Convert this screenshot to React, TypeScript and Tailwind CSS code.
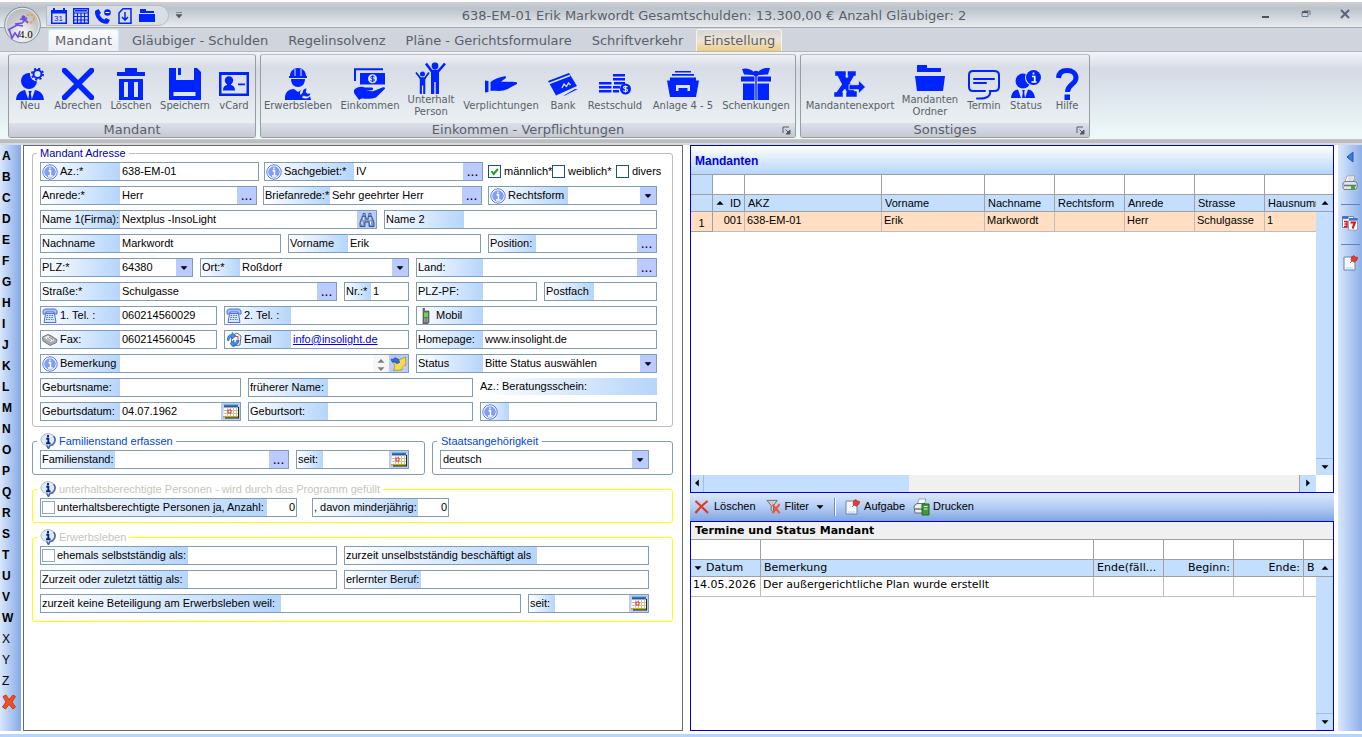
import { useId, type ReactNode } from "react";

const BLUE = "#0024ff";

function Ico({ children, className = "size-8" }: { children: ReactNode; className?: string }) {
  return (
    <svg viewBox="0 0 32 32" className={`${className} shrink-0`} fill={BLUE} aria-hidden="true">
      {children}
    </svg>
  );
}

/* ---------- ribbon icons ---------- */
const suit = (
  <>
    <path d="M2 32c.5-6 3.500-9 9-10l3.500 10zM30 32c-.5-6-3.500-9-9-10l-3.500 10z" />
    <path d="M14.200 23h3.600l-1 2.500 1.200 6.500h-4l1.200-6.500z" />
  </>
);
const IcNeu = () => (
  <Ico>
    <circle cx="15" cy="13" r="8" />
    {suit}
    <circle cx="23.500" cy="6" r="7.500" fill="#e3e6ee" />
    <circle cx="23.500" cy="6" r="4" fill="none" stroke={BLUE} strokeWidth="2" />
    <circle cx="23.500" cy="6" r="5.600" fill="none" stroke={BLUE} strokeWidth="1.800" strokeDasharray="2.200 2.200" />
  </Ico>
);
const IcX = () => (
  <Ico>
    <path d="M2.500 2.500 29.500 29.500M29.500 2.500 2.500 29.500" stroke={BLUE} strokeWidth="5.500" strokeLinecap="round" />
  </Ico>
);
const IcTrash = () => (
  <Ico>
    <path d="M2 4h8V0h12v4h8v4H2zM4 11h24v21H4zM9 14v15h4V14zM19 14v15h4V14z" fillRule="evenodd" />
  </Ico>
);
const IcSave = () => (
  <Ico>
    <path d="M0 0h7v12h18V0h3l4 4v28H0zM4.500 24v4h22v-4z" fillRule="evenodd" />
    <path d="M9 0h3v7H9z" />
  </Ico>
);
const IcCard = () => (
  <Ico>
    <path d="M1 4h30v24H1zM3.500 7v18.500h25V7z" fillRule="evenodd" />
    <circle cx="11" cy="12.500" r="4.200" />
    <path d="M5 22.500c0-4 2-5 4-5.500v-2h4v2c2 .5 4 1.500 4 5.500zM20 15.500h7v1.800h-7z" />
  </Ico>
);
const IcWorker = () => (
  <Ico>
    <path d="M8 8c0-5 3.500-8 8-8s8 3 8 8h1v2H7V8zM9 11h14c0 5-3 8-7 8s-7-3-7-8zM3 30c0-6 4-9 9-9l4 3 4-3c3 0 5 .8 7 3l2 8H3z" />
    <path d="M13 1v7M19 1v7" stroke="#e0e4ec" strokeWidth="1" />
    <circle cx="23.500" cy="25" r="5.500" fill="#e4e9ee" />
    <path d="m16 31 6.500-6" stroke={BLUE} strokeWidth="2.600" />
    <path d="M24.500 20.500a4 4 0 1 0 4 5l-3 .3-1.700-1.600z" />
  </Ico>
);
const IcMoney = () => (
  <Ico>
    <path d="M1 13V1.200h28" fill="none" stroke={BLUE} strokeWidth="2" />
    <path d="M6 5h25v11.500H6z" />
    <circle cx="18.500" cy="10.700" r="4.500" fill="#dfe4ee" />
    <path d="M20.500 8.800c-1-.9-3.800-.8-3.800.6 0 1.700 3.800.9 3.800 2.600 0 1.500-2.900 1.600-4 .5M18.600 7.500v6.600" fill="none" stroke={BLUE} strokeWidth="1" />
    <path d="M0 22c3-3.500 8-4 11-2.500h7c1.500.2 1.500 2.500 0 2.700l-6 .6 7 .5 10-4c2-.6 2.600 1 1.500 2L22 29.500c-5 2-11 1-14.500 1L5 32 0 25z" />
  </Ico>
);
const IcPeople = () => (
  <Ico>
    <circle cx="20" cy="4" r="3.400" />
    <circle cx="7.500" cy="12" r="2.500" />
    <path d="m11 1.500 5.500 7.500h7L30 1.500" fill="none" stroke={BLUE} strokeWidth="2.600" />
    <path d="M16 8h8v24h-3.300V20h-1.400v12H16zM4.800 15.500h5.500V32H8.200v-8.500H6.900V32H4.800z" />
    <path d="m1 10.500 4.500 5.800h4.300L14 10.500" fill="none" stroke={BLUE} strokeWidth="1.800" />
  </Ico>
);
const IcHand = () => (
  <Ico>
    <path d="M0 12.500 3.500 13v11L0 24.500zM5.500 14c3-2 6-4 9-4.500l5-1.300c2-.2 2 1.800.5 2.600l-4 2.700c4 .5 11 .2 15.500.7 1.500.3 1 1.500 0 2C27 18.500 22 21.500 18.500 22.500c-4 1-9 0-13 .5z" />
  </Ico>
);
const IcBank = () => (
  <Ico>
    <path d="M1 13 22 5l8 13-21 9.500z" />
    <path d="M2 15.500 23 7.500" stroke="#dfe5ec" strokeWidth="1.500" />
    <path d="m15 20 2-4 2.500 2.500 2-3.500 2 2" fill="none" stroke="#dfe5ec" strokeWidth="1.300" />
    <path d="m15 28 13-7.500 4 .5-14 7z" stroke="#e4e9ee" strokeWidth="1" />
  </Ico>
);
const IcCoins = () => (
  <Ico>
    <path d="M14 6h12v2.600H14zM14 10h12v2.600H14zM15 14h11v2.600H15zM0 14h12.500v2.600H0zM0 18h12.500v2.600H0zM14 18h7v2.600h-7zM0 22h12.500v2.600H0zM14 22h6v2.600h-6z" />
    <circle cx="26.500" cy="21" r="5.500" />
    <path d="M28.500 19c-1-1-4-.8-4 .6 0 1.700 4 .9 4 2.600 0 1.500-3 1.600-4.200.5M26.500 17.500v7" fill="none" stroke="#e4e9ee" strokeWidth="1.100" />
  </Ico>
);
const IcDrawer = () => (
  <Ico>
    <path d="M8 3h16v1.500H8zM5 6h22v1.800H5zM3 9.500h26v3h3l-3 16.500H3L0 12.500h3zM9 17v6h2.500v-3h9v3H23v-6z" fillRule="evenodd" />
  </Ico>
);
const IcGift = () => (
  <Ico>
    <path d="M1 8.500h13.500v5H1zM17.500 8.500H31v5H17.500zM3 15.500h11.500V32H3zM17.500 15.500H29V32H17.500zM15.300 8h1.400v24h-1.400zM14 7 4 6.500 2 1c4-1.500 9 0 12 3zM18 7l10-.5L30 0c-4-1-9 1-12 4z" />
    <circle cx="16" cy="5.500" r="2.800" />
  </Ico>
);
const IcExport = () => (
  <Ico>
    <path d="M2 4h9v3H9.500l3.500 5 3-5h-1.500V4H21v3h-1.500L15 14.500l5 9.500h2v4h-9v-3h1.200L11 19l-4.500 6H8v3H1v-3h2l6-8.500L4 7H2z" stroke={BLUE} strokeWidth="1.500" />
    <path d="m31.500 19-7-6.800v4.500H15v5h9.500v4z" stroke="#dfe5ec" strokeWidth=".8" />
  </Ico>
);
const IcFolder = () => (
  <Ico>
    <path d="M3 3h10v3h14v4H3zM1 14h30l-2 15H3z" />
  </Ico>
);
const IcNote = () => (
  <Ico>
    <path d="M9 23H5c-3 0-4-1.500-4-4V7c0-2.500 1.500-4 4-4h21c3 0 5 1.500 5 4v12c0 2.500-1.500 4-5 4h-4c1 5-3 8-13 7.500M6 11h20M6 15h12M10 23h7" fill="none" stroke={BLUE} strokeWidth="2" strokeLinecap="round" />
  </Ico>
);
const IcStatus = () => (
  <Ico>
    <circle cx="13" cy="13" r="7.500" />
    <path d="M1 30c.5-5 3-8 7-8.500L11 30zM25 30c-.5-5-3-8-7-8.500L15 30zM12 22h3l-.8 2 .8 6h-3l.8-6z" />
    <circle cx="23.500" cy="9.500" r="8.500" fill="#e0e4ec" />
    <circle cx="23.500" cy="9.500" r="7.500" />
    <path d="M22 8.500h2.700V14M21.500 14h5M23.500 4.500v2" fill="none" stroke="#fff" strokeWidth="1.700" />
  </Ico>
);
const IcHelp = () => (
  <Ico>
    <path d="M7.500 10c.3-5 3.500-7.500 8.500-7.500s9 2.500 9 7.500c0 6.500-8.500 6-8.500 14" fill="none" stroke={BLUE} strokeWidth="5" />
    <path d="M13.500 26.500h5.500V32h-5.500z" />
  </Ico>
);

const groups: { title: string; launcher?: boolean; items: [string, () => ReactNode, string][] }[] = [
  {
    title: "Mandant",
    items: [
      ["Neu", IcNeu, "w-[42px]"],
      ["Abrechen", IcX, "w-[54px]"],
      ["Löschen", IcTrash, "w-[52px]"],
      ["Speichern", IcSave, "w-[56px]"],
      ["vCard", IcCard, "w-[42px]"],
    ],
  },
  {
    title: "Einkommen - Verpflichtungen",
    launcher: true,
    items: [
      ["Erwerbsleben", IcWorker, "w-[74px]"],
      ["Einkommen", IcMoney, "w-[70px]"],
      ["Unterhalt\nPerson", IcPeople, "w-[52px]"],
      ["Verplichtungen", IcHand, "w-[88px]"],
      ["Bank", IcBank, "w-[36px]"],
      ["Restschuld", IcCoins, "w-[68px]"],
      ["Anlage 4 - 5", IcDrawer, "w-[68px]"],
      ["Schenkungen", IcGift, "w-[78px]"],
    ],
  },
  {
    title: "Sonstiges",
    launcher: true,
    items: [
      ["Mandantenexport", IcExport, "w-[98px]"],
      ["Mandanten\nOrdner", IcFolder, "w-[62px]"],
      ["Termin", IcNote, "w-[46px]"],
      ["Status", IcStatus, "w-[38px]"],
      ["Hilfe", IcHelp, "w-[44px]"],
    ],
  },
];

/* ---------- small coloured icons ---------- */
const S = ({ children, className = "size-4" }: { children: ReactNode; className?: string }) => (
  <svg viewBox="0 0 16 16" className={`${className} shrink-0`} aria-hidden="true">
    {children}
  </svg>
);
const Info = () => (
  <S>
    <circle cx="8" cy="8" r="7.200" fill="#fff" stroke="#5577e8" strokeWidth="1" />
    <circle cx="8" cy="8" r="5.800" fill="#7f9cfa" />
    <path d="M8 3.500v2M6.500 6.800H8.500V12M6 12h4.500" stroke="#fff" strokeWidth="1.400" fill="none" />
  </S>
);
const Bubble = () => (
  <S>
    <path d="M8 .7c4 0 7 2.700 7 6 0 3-2.300 5.300-5 5.800L8.500 15.500 6.800 12.500C3.500 12 1 9.700 1 6.700s3-6 7-6z" fill="#dfeafa" stroke="#a3b4cb" />
    <path d="M13.500 3c3.500 4 .5 9-3.500 9.500L8.500 15.500 6.800 12.500" fill="none" stroke="#4a6da0" strokeWidth="1.600" />
    <path d="M8 2v2.200M6.300 5.700h2V10M6 10.200h4.500" stroke="#0a1f8a" strokeWidth="1.900" fill="none" />
  </S>
);
const Phone = () => (
  <S>
    <path d="M1 2.500 3 1h10l2 1.500V6h-3V4H4v2H1z" fill="#a9c0fb" stroke="#4a6fe0" />
    <path d="M3.500 5.500h9L14 14.500H2z" fill="#dbe6ff" stroke="#4a6fe0" />
    <path d="M4.500 7.500h7M4.300 9.500h7.500M4 11.500h8" stroke="#4a6fe0" strokeWidth="1.200" strokeDasharray="1.500 1" />
  </S>
);
const Fax = () => (
  <S>
    <path d="M.5 5 6 2.500l3 1.200 6 4-.5 2.800L8 13.500 1 9z" fill="#a9aaaf" stroke="#777a80" />
    <path d="m2 5.500 4-2L12.500 8 9 10z" fill="#ececf0" />
    <path d="m5 6 4 2.700M7 5l4 2.700" stroke="#898c94" />
  </S>
);
const Mail = () => (
  <S>
    <path d="M5 4 11 1l4 3-1 9-8 1z" fill="#f4f5f7" stroke="#60708c" />
    <path d="M1.500 8.500C1 4.500 3 2.500 6 2.500V.5l4 3.500-4 3V5C4 5 3 6.500 3 8.500z" fill="#3f8ff0" stroke="#1d56b0" strokeWidth=".6" />
    <path d="M13 8c0 3-1.500 5-5 5v2l-4-3.500 4-3.300V11c2 0 2.800-1 2.800-3z" fill="#3f8ff0" stroke="#1d56b0" strokeWidth=".6" />
    <path d="M9.500 4.500h2.500v2.500" stroke="#d04040" fill="none" />
  </S>
);
const Mobile = () => (
  <S>
    <path d="M5 0h1.500v3H11v11.500L9.500 16H5z" fill="#6b6f74" stroke="#44484c" strokeWidth=".6" />
    <path d="M6 4.500h4V9H6z" fill="#64d94c" />
    <path d="M6 11h4M6 13h4" stroke="#c4c8cc" strokeDasharray="1 .5" />
  </S>
);
const Binoculars = () => (
  <S>
    <path d="M3.500 4h3l.7 3h1.600l.7-3h3L15 10.500v4h-5V10H6v4.500H1v-4z" fill="#7d9ac8" stroke="#2d4b7a" strokeWidth=".9" />
    <path d="M4 1.500h2.200V4H4zM9.800 1.500H12V4H9.800z" fill="#b9cce8" stroke="#2d4b7a" strokeWidth=".8" />
    <path d="M3 9.500v3M11.500 9.500v3M4.700 5v3M11 5v3" stroke="#fff" />
  </S>
);
const Calendar = () => (
  <svg viewBox="0 0 18 16" className="h-4 w-[18px] shrink-0" aria-hidden="true">
    <path d="M3 3h14v11.500H3z" fill="#222" />
    <path d="M2 2h14v11H1z" fill="#fffef2" />
    <path d="M2 1h14v2.500H2z" fill="#2f54b5" />
    <path d="M2 1h14" stroke="#39a6a0" />
    <path d="M5.500 3.500V13M8.500 3.500V13M11.500 3.500V13M14.500 3.500V13M2 6.500h14M2 9.500h14" stroke="#c9c68c" />
    <path d="M1 12.700h15" stroke="#b5b02c" strokeWidth="1.600" />
    <path d="M6 6h3v3H6z" fill="#fff" stroke="#d31e62" />
  </svg>
);
const Note = () => (
  <S className="size-[17px]">
    <path d="M2.500 7 14.500 2l.5 7-4 5-8 .5C5 12 5 9 2.500 7z" fill="#f5dc52" stroke="#a48a18" strokeWidth=".7" />
    <path d="M11 14c0-3 1-4 4-5" fill="#fff3a0" stroke="#a48a18" strokeWidth=".7" />
    <path d="M1 4h2l1.500-1.500L8 4l1 3-2.500 1L4 6.500H2z" fill="#2b6fe0" stroke="#143f90" strokeWidth=".6" />
  </S>
);
const Printer = () => (
  <S>
    <path d="M5 1h8l-2 6H3z" fill="#fff" stroke="#8a8f98" strokeWidth=".7" />
    <path d="M6 3h5M5.500 5h5" stroke="#9aa" strokeWidth=".7" />
    <path d="M1 8 3 6.500h10L15 8v5l-2 1.500H2L1 13z" fill="#e4e6e6" stroke="#5f6468" strokeWidth=".8" />
    <path d="M2 10.500h12" stroke="#6a7074" strokeWidth="1.500" />
    <path d="M9 11h4v3H9z" fill="#27b53c" />
  </S>
);
const GreenPrinter = () => (
  <svg viewBox="0 0 18 18" className="size-[18px] shrink-0" aria-hidden="true">
    <path d="M6 1h7l-2 6H4z" fill="#fff" stroke="#8a8f98" strokeWidth=".8" />
    <path d="M1 8 4 5.500h8V15H2z" fill="#eceeee" stroke="#666c70" />
    <path d="M2 11h7" stroke="#70767a" strokeWidth="1.500" />
    <path d="M9 6h7v11H9z" fill="#3f9a3c" stroke="#1e6a22" />
    <path d="M11 8.500h3.500M11 11h3.500" stroke="#e2f4dc" />
  </svg>
);
const PinNote = () => (
  <S>
    <path d="M2 2h11v13H2z" fill="#f6f9ff" stroke="#6484b8" />
    <path d="M4 12h7v2H4z" fill="#d4e2f8" />
    <path d="m8 8 3-3" stroke="#777" />
    <path d="M9.500 2 12 .5l1 1.500 2.700.5L15 5l-2.500 2.200L9 5.500z" fill="#f0382c" stroke="#b01a10" strokeWidth=".6" />
  </S>
);
const Days = () => (
  <S>
    <path d="M.5 1.500h11v11H.5z" fill="#fff" stroke="#6688cc" />
    <path d="M.5 1h6v3h-6zM7 3h8.500v3H7z" fill="#3a72d8" />
    <path d="M6.500 5.500h9v9.500h-9z" fill="#fff" stroke="#7793cc" strokeWidth=".8" />
    <path d="M8.500 7.500h4.500L10.500 13.500" stroke="#f00b0b" strokeWidth="2" fill="none" />
    <path d="M2 6.500h3v5H2M2.500 9h2" stroke="#f00b0b" strokeWidth="1.500" fill="none" />
  </S>
);
const RedX = () => (
  <S>
    <path d="M2 2.500 5 1l3 4.500L12 1l2.500 1.500L11 8l3.500 5-2.500 2-4-4.500L4.500 15 1.500 13 5 8z" fill="#f25022" stroke="#b82c10" strokeWidth=".8" />
  </S>
);
const DelX = () => (
  <S>
    <path d="M1.500 2C6 6 10 10 14 14M13.500 2C9 5.500 5 9.500 1.500 14" stroke="#e8341a" strokeWidth="2.200" fill="none" />
  </S>
);
const Funnel = () => (
  <S className="size-[15px]">
    <path d="M1 1.500h11L8 7v7l-2.500-2V7z" fill="#c9ccd0" stroke="#666a70" />
    <path d="m7 6 7.500 9M14.500 5.500 7 15" stroke="#f0522c" strokeWidth="2.200" />
  </S>
);
const Tri = ({ dir = "down" }: { dir?: "down" | "up" | "left" | "right" }) => (
  <svg viewBox="0 0 8 8" className="size-2 shrink-0" aria-hidden="true">
    <path d={{ down: "M.5 2.200h7L4 6z", up: "M.5 5.800h7L4 2z", left: "M5.800.5v7L2 4z", right: "M2.200.5v7L6 4z" }[dir]} />
  </svg>
);

/* ---------- form pieces ---------- */
interface FieldProps {
  label: string;
  w: string;
  lw: string;
  value?: string;
  icon?: ReactNode;
  end?: "dots" | "cal" | "bin" | "note";
  select?: boolean;
  link?: boolean;
  check?: boolean;
  right?: boolean;
}

function Tick({ id, on = false, edge = "border-[#1c5180]" }: { id: string; on?: boolean; edge?: string }) {
  return (
    <span className="relative flex size-[13px] shrink-0">
      <input id={id} type="checkbox" defaultChecked={on} className={`peer size-[13px] appearance-none border bg-white ${edge}`} />
      <svg viewBox="0 0 13 13" className="pointer-events-none invisible absolute inset-0 size-[13px] peer-checked:visible" aria-hidden="true">
        <path d="m3.500 6 2.200 3L9.800 4" fill="none" stroke="#21a121" strokeWidth="2" />
      </svg>
    </span>
  );
}

function Field({ label, w, lw, value = "", icon, end, select, link, check, right }: FieldProps) {
  const id = useId();
  return (
    <div className={`flex h-[19px] shrink-0 border border-[#7f9db9] bg-white ${w}`}>
      <div className={`flex shrink-0 items-center gap-[2px] whitespace-nowrap bg-linear-to-r from-white to-[#b5d5fa] pl-px ${lw}`}>
        {icon}
        {check && <Tick id={`${id}-c`} edge="border-[#8fa9c4]" />}
        {label && <label htmlFor={check ? `${id}-c` : id}>{label}</label>}
      </div>
      {select ? (
        <>
          <select id={id} aria-label={label || "Staatsangehörigkeit"} className="min-w-0 flex-1 appearance-none bg-white pl-[2px] outline-none">
            <option>{value}</option>
          </select>
          <span className="flex w-4 items-center justify-center bg-[#bccbff]">
            <Tri />
          </span>
        </>
      ) : link ? (
        <a id={id} href="mailto:info@insolight.de" className="min-w-0 flex-1 pl-[2px] leading-[17px] text-[#0000ee] underline">
          {value}
        </a>
      ) : (
        <input id={id} aria-label={label || "Beratungsschein"} defaultValue={value} className={`min-w-0 flex-1 bg-transparent outline-none ${right ? "pr-px text-right" : "pl-[2px]"}`} />
      )}
      {end === "note" && (
        <span className="flex w-4 flex-col items-center justify-between bg-[#efefef] py-[2px] opacity-50">
          <Tri dir="up" />
          <Tri />
        </span>
      )}
      {end && (
        <button type="button" aria-label={`${label} auswählen`} className="flex w-[19px] shrink-0 items-center justify-center bg-[#bccbff]">
          {end === "dots" && <span className="text-sm leading-[17px]">...</span>}
          {end === "cal" && <Calendar />}
          {end === "bin" && <Binoculars />}
          {end === "note" && <Note />}
        </button>
      )}
    </div>
  );
}

const Row = ({ children }: { children: ReactNode }) => <div className="flex justify-between">{children}</div>;

function Check({ label, on }: { label: string; on?: boolean }) {
  const id = useId();
  return (
    <span className="flex w-[64px] items-center gap-[3px] whitespace-nowrap">
      <Tick id={id} on={on} />
      <label htmlFor={id}>{label}</label>
    </span>
  );
}

function Group({ title, tone, icon, className = "", children }: { title: string; tone: string; icon?: boolean; className?: string; children: ReactNode }) {
  return (
    <fieldset className={`rounded-[3px] border pl-[7px] ${className}`}>
      <legend className={`-ml-[3px] px-[3px] ${tone}`}>
        <span className={`flex items-center gap-[3px] whitespace-nowrap ${icon ? "h-4" : "h-[14px]"}`}>
          {icon && <Bubble />}
          {title}
        </span>
      </legend>
      {children}
    </fieldset>
  );
}

function MandantForm() {
  return (
    <form className="flex w-[660px] shrink-0 flex-col gap-[6px] border border-[#696969] bg-white pl-2 pr-[9px]">
      <Group title="Mandant Adresse" tone="text-[#0000b4]" className="border-[#bdbdbd] pb-[5px] pr-[15px] pt-[2px]">
        <div className="flex flex-col gap-[5px]">
          <Row>
            <Field label="Az.:*" w="w-[219px]" lw="w-[79px]" icon={<Info />} value="638-EM-01" />
            <Field label="Sachgebiet:*" w="w-[219px]" lw="w-[89px]" icon={<Info />} value="IV" end="dots" />
            <div className="-mr-[23px] flex w-[192px] items-center">
              <Check label="männlich*" on />
              <Check label="weiblich*" />
              <Check label="divers" />
            </div>
          </Row>
          <Row>
            <Field label="Anrede:*" w="w-[217px]" lw="w-[79px]" value="Herr" end="dots" />
            <Field label="Briefanrede:*" w="w-[219px]" lw="w-[66px]" value="Sehr geehrter Herr" end="dots" />
            <Field label="Rechtsform" w="w-[169px]" lw="w-[79px]" icon={<Info />} select />
          </Row>
          <Row>
            <Field label="Name 1(Firma):" w="w-[337px]" lw="w-[79px]" value="Nextplus -InsoLight" end="bin" />
            <Field label="Name 2" w="w-[273px]" lw="w-[79px]" />
          </Row>
          <Row>
            <Field label="Nachname" w="w-[241px]" lw="w-[79px]" value="Markwordt" />
            <Field label="Vorname" w="w-[193px]" lw="w-[59px]" value="Erik" />
            <Field label="Position:" w="w-[169px]" lw="w-[47px]" end="dots" />
          </Row>
          <Row>
            <Field label="PLZ:*" w="w-[153px]" lw="w-[79px]" value="64380" select />
            <Field label="Ort:*" w="w-[209px]" lw="w-[39px]" value="Roßdorf" select />
            <Field label="Land:" w="w-[241px]" lw="w-[66px]" end="dots" />
          </Row>
          <Row>
            <Field label="Straße:*" w="w-[297px]" lw="w-[79px]" value="Schulgasse" end="dots" />
            <Field label="Nr.:*" w="w-[65px]" lw="w-[26px]" value="1" />
            <Field label="PLZ-PF:" w="w-[121px]" lw="w-[66px]" />
            <Field label="Postfach" w="w-[113px]" lw="w-[49px]" />
          </Row>
          <Row>
            <Field label="1. Tel. :" w="w-[177px]" lw="w-[79px]" icon={<Phone />} value="060214560029" />
            <Field label="2. Tel. :" w="w-[185px]" lw="w-[66px]" icon={<Phone />} />
            <Field label="Mobil" w="w-[241px]" lw="w-[66px]" icon={<Mobile />} />
          </Row>
          <Row>
            <Field label="Fax:" w="w-[177px]" lw="w-[79px]" icon={<Fax />} value="060214560045" />
            <Field label="Email" w="w-[185px]" lw="w-[66px]" icon={<Mail />} value="info@insolight.de" link />
            <Field label="Homepage:" w="w-[241px]" lw="w-[66px]" value="www.insolight.de" />
          </Row>
          <Row>
            <Field label="Bemerkung" w="w-[369px]" lw="w-[79px]" icon={<Info />} end="note" />
            <Field label="Status" w="w-[241px]" lw="w-[66px]" value="Bitte Status auswählen" select />
          </Row>
          <Row>
            <Field label="Geburtsname:" w="w-[201px]" lw="w-[79px]" />
            <Field label="früherer Name:" w="w-[225px]" lw="w-[79px]" />
            <span className="h-[17px] w-[177px] bg-linear-to-r from-white to-[#b5d5fa] leading-[17px]">Az.: Beratungsschein:</span>
          </Row>
          <Row>
            <Field label="Geburtsdatum:" w="w-[201px]" lw="w-[79px]" value="04.07.1962" end="cal" />
            <Field label="Geburtsort:" w="w-[225px]" lw="w-[79px]" />
            <Field label="" w="w-[177px]" lw="w-[28px]" icon={<Info />} />
          </Row>
        </div>
      </Group>

      <div className="flex gap-[7px]">
        <Group title="Familienstand erfassen" tone="text-[#0046d5]" icon className="w-[393px] border-[#7f9db9] pb-[5px] pr-[15px] pt-px">
          <Row>
            <Field label="Familienstand:" w="w-[249px]" lw="w-[74px]" end="dots" />
            <Field label="seit:" w="w-[113px]" lw="w-[26px]" end="cal" />
          </Row>
        </Group>
        <fieldset className="flex-1 rounded-[3px] border border-[#7f9db9] pb-[5px] pl-[7px] pt-px">
          <legend className="-ml-[3px] h-4 px-1 leading-4 text-[#0046d5]">Staatsangehörigkeit</legend>
          <Field label="" w="w-[209px]" lw="hidden" value="deutsch" select />
        </fieldset>
      </div>

      <Group title="unterhaltsberechtigte Personen - wird durch das Programm gefüllt" tone="text-[#c6c6ba]" icon className="border-[#ffff00] pb-[5px] pt-px">
        <div className="flex gap-[15px]">
          <Field label="unterhaltsberechtigte Personen ja, Anzahl:" w="w-[257px]" lw="w-[226px]" check value="0" right />
          <Field label=", davon minderjährig:" w="w-[137px]" lw="w-[105px]" value="0" right />
        </div>
      </Group>

      <Group title="Erwerbsleben" tone="text-[#c6c6ba]" icon className="border-[#ffff00] pb-2 pr-[23px] pt-px">
        <div className="flex flex-col gap-[5px]">
          <Row>
            <Field label="ehemals selbstständig als:" w="w-[297px]" lw="w-[147px]" check />
            <Field label="zurzeit unselbstständig beschäftigt als" w="w-[305px]" lw="w-[192px]" />
          </Row>
          <Row>
            <Field label="Zurzeit oder zuletzt tättig als:" w="w-[297px]" lw="w-[147px]" />
            <Field label="erlernter Beruf:" w="w-[305px]" lw="w-[76px]" />
          </Row>
          <Row>
            <Field label="zurzeit keine Beteiligung am Erwerbsleben weil:" w="w-[481px]" lw="w-[240px]" />
            <Field label="seit:" w="w-[121px]" lw="w-[26px]" end="cal" />
          </Row>
        </div>
      </Group>
    </form>
  );
}

/* ---------- grids ---------- */
function ScrollSide() {
  return (
    <div className="flex w-[17px] shrink-0 flex-col">
      <div className="h-5 border-b border-[#a0a0a0] bg-white" />
      <button type="button" aria-label="Nach oben" className="flex h-[17px] items-center justify-center border-b border-[#a0a0a0] bg-[#c3dffd]">
        <Tri dir="up" />
      </button>
      <div className="flex-1 bg-[#c3dffd]" />
      <button type="button" aria-label="Nach unten" className="flex h-[17px] items-center justify-center border-t border-[#a9bcd2] bg-[#c3dffd]">
        <Tri />
      </button>
    </div>
  );
}

const fcell = "border-b border-r border-[#a0a0a0] h-5";
const hcell = "h-[17px] border-b border-r border-[#a0a0a0] bg-[#c3dffd] px-[3px] text-left font-normal leading-4 overflow-hidden whitespace-nowrap";

function MandantenGrid() {
  const cols: [string, string, string][] = [
    ["ID", "001", "w-[32px]"],
    ["AKZ", "638-EM-01", "w-[137px]"],
    ["Vorname", "Erik", "w-[103px]"],
    ["Nachname", "Markwordt", "w-[70px]"],
    ["Rechtsform", "", "w-[70px]"],
    ["Anrede", "Herr", "w-[70px]"],
    ["Strasse", "Schulgasse", "w-[70px]"],
    ["Hausnummer", "1", ""],
  ];
  return (
    <section className="flex flex-[348_0_0px] flex-col border border-[#0000dc] bg-white">
      <h2 className="h-[29px] border-b border-[#a0a0a0] bg-linear-to-b from-white to-[#b5d5fa] pl-1 text-xs font-bold leading-[30px] text-[#0000ee]">Mandanten</h2>
      <div className="flex flex-1">
        <div className="min-w-0 flex-1">
          <table className="w-full table-fixed border-separate border-spacing-0">
            <colgroup>
              <col className="w-[22px]" />
              {cols.map(([h, , w]) => (
                <col key={h} className={w} />
              ))}
            </colgroup>
            <thead>
              <tr>
                <td className={`${fcell} bg-[#c3dffd]`} />
                {cols.map(([h]) => (
                  <td key={h} className={`${fcell} last:border-r-0`} />
                ))}
              </tr>
              <tr>
                <td className={hcell} />
                {cols.map(([h]) => (
                  <th key={h} className={`${hcell} last:border-r-0`}>
                    {h === "ID" ? (
                      <span className="flex items-center justify-between">
                        <Tri dir="up" />
                        {h}
                      </span>
                    ) : (
                      h
                    )}
                  </th>
                ))}
              </tr>
            </thead>
            <tbody>
              <tr className="bg-[#ffdec1] leading-4">
                <td className="h-5 border-b border-r border-[#a0a0a0] pt-[2px] text-center">1</td>
                {cols.map(([h, v]) => (
                  <td key={h} className={`h-5 overflow-hidden whitespace-nowrap border-b border-r border-[#bdbdbd] px-[2px] align-top last:border-r-0 ${h === "ID" ? "text-right" : ""}`}>
                    {v}
                  </td>
                ))}
              </tr>
            </tbody>
          </table>
        </div>
        <ScrollSide />
      </div>
      <div className="flex h-[17px] pr-[17px]">
        <button type="button" aria-label="Nach links" className="flex w-[13px] items-center justify-center border-r border-[#a9bcd2] bg-[#c3dffd]">
          <Tri dir="left" />
        </button>
        <div className="flex-1 bg-[#f0f0f0]">
          <div className="h-full w-[205px] bg-[#c3dffd]" />
        </div>
        <button type="button" aria-label="Nach rechts" className="flex w-[17px] items-center justify-center border-l border-[#a0a0a0] bg-[#c3dffd]">
          <Tri dir="right" />
        </button>
      </div>
    </section>
  );
}

function TermineGrid() {
  const cols: [string, string, string, string][] = [
    ["Datum", "14.05.2026", "w-[70px]", ""],
    ["Bemerkung", "Der außergerichtliche Plan wurde erstellt", "", ""],
    ["Ende(fäll...", "", "w-[70px]", ""],
    ["Beginn:", "", "w-[70px]", "text-right"],
    ["Ende:", "", "w-[70px]", "text-right"],
    ["B", "", "w-[12px]", ""],
  ];
  return (
    <section className="flex flex-[210_0_0px] flex-col border border-[#0000dc] bg-white font-['DejaVu_Sans',sans-serif] text-[11px]">
      <h2 className="h-[18px] border-b border-[#a0a0a0] bg-[#f0f0f0] pl-1 font-bold leading-[18px]">Termine und Status Mandant</h2>
      <div className="flex flex-1">
        <div className="min-w-0 flex-1">
          <table className="w-full table-fixed border-separate border-spacing-0">
            <colgroup>
              {cols.map(([h, , w]) => (
                <col key={h} className={w} />
              ))}
            </colgroup>
            <thead>
              <tr>
                {cols.map(([h]) => (
                  <td key={h} className={`${fcell} last:border-r-0`} />
                ))}
              </tr>
              <tr>
                {cols.map(([h, , , a]) => (
                  <th key={h} className={`${hcell} last:border-r-0`}>
                    {h === "Datum" ? (
                      <span className="flex items-center gap-1">
                        <Tri />
                        {h}
                      </span>
                    ) : (
                      <span className={`block ${a}`}>{h}</span>
                    )}
                  </th>
                ))}
              </tr>
            </thead>
            <tbody>
              <tr>
                {cols.map(([h, v]) => (
                  <td key={h} className="h-5 whitespace-nowrap border-b border-r border-[#bdbdbd] px-[2px] align-top leading-4 last:border-r-0">
                    {v}
                  </td>
                ))}
              </tr>
            </tbody>
          </table>
        </div>
        <ScrollSide />
      </div>
    </section>
  );
}

function Toolbar() {
  const b = "flex items-center gap-1";
  return (
    <div className="flex h-7 shrink-0 items-center bg-linear-to-b from-[#dce9fc] via-[#b4cdf4] to-[#80a5e2] pl-1">
      <button type="button" className={b}><DelX />Löschen</button>
      <button type="button" className={`${b} ml-[10px]`}><Funnel />Fliter<span className="ml-[3px]"><Tri /></span></button>
      <span className="ml-[10px] mr-2 h-[18px] border-l border-r border-l-[#6a8ccb] border-r-white" />
      <button type="button" className={b}><PinNote />Aufgabe</button>
      <button type="button" className="ml-2 flex items-center gap-[2px]"><GreenPrinter />Drucken</button>
    </div>
  );
}

/* ---------- window chrome ---------- */
function Orb() {
  return (
    <button type="button" aria-label="Programm-Menü" className="absolute left-[3px] top-1 size-[38px]">
      <svg viewBox="0 0 38 38" className="size-[38px]" aria-hidden="true">
        <defs>
          <radialGradient id="orb" cx=".5" cy=".75" r=".75">
            <stop offset="0" stopColor="#ffffff" />
            <stop offset=".55" stopColor="#c9ccd0" />
            <stop offset="1" stopColor="#b4b7bc" />
          </radialGradient>
        </defs>
        <circle cx="19.500" cy="19" r="17.800" fill="url(#orb)" stroke="#8a8e94" />
        <circle cx="19.500" cy="19" r="16.600" fill="none" stroke="#eceef0" />
        <circle cx="27" cy="12.500" r="4" fill="none" stroke="#e8a24c" strokeWidth="2" strokeDasharray="2.500 1.300" />
        <path d="m6 23 3 9 3-5 3 4 2-6M5 24l9-5 6 1M12 18l7-1 5-5M17 13l5 1 3 3M19 11l2-1" fill="none" stroke="#6a4ee0" strokeWidth="1.600" />
        <circle cx="20.500" cy="11.500" r="2" fill="#6a4ee0" />
        <text x="16" y="32" fontSize="11" fontFamily="Liberation Serif, serif" fill="#000">4.0</text>
      </svg>
    </button>
  );
}

function QuickAccess() {
  const q = "size-4 shrink-0";
  return (
    <div className="ml-[46px] flex h-[21px] w-[123px] items-center gap-[6px] rounded-r-full border border-[#b7bcc4] bg-[#d9dde4] pl-1">
      <button type="button" aria-label="Kalender">
        <svg viewBox="0 0 16 16" className={q}>
          <path d="M0 2h2V0h2v2h8V0h2v2h2v14H0zM1.500 5.500v9h13v-9z" fill={BLUE} fillRule="evenodd" />
          <text x="3" y="13" fontSize="8" fontFamily="Liberation Sans, sans-serif" fill={BLUE}>31</text>
        </svg>
      </button>
      <button type="button" aria-label="Rechner">
        <svg viewBox="0 0 16 16" className={q} fill="none" stroke={BLUE}>
          <path d="M.7.7h14.600v14.600H.7z" strokeWidth="1.400" />
          <path d="M1 5h14M1 8.500h14M1 12h14M4.500 5v10M8 5v10M11.500 5v10" strokeWidth="1.200" />
          <path d="M2 2.800h12" strokeWidth="1.500" />
        </svg>
      </button>
      <button type="button" aria-label="Telefon">
        <svg viewBox="0 0 16 16" className={q} fill={BLUE}>
          <path d="M0 3 3.500 1 6 5 4.500 6.500c1 2.500 2.500 4 5 5L11 10l4 2-2 3.500C6 17-.5 10 0 3z" />
          <circle cx="12.500" cy="4.500" r="3.300" />
          <path d="M10.500 4.500h4" stroke="#fff" />
        </svg>
      </button>
      <button type="button" aria-label="Herunterladen">
        <svg viewBox="0 0 16 16" className={q} fill="none" stroke={BLUE} strokeWidth="1.500">
          <path d="M6 .8h8v14.400H2V5zM8 4v8M5 9l3 3.200L11 9" />
        </svg>
      </button>
      <button type="button" aria-label="Ordner">
        <svg viewBox="0 0 16 16" className={q} fill={BLUE}>
          <path d="M1 1h6v2h8v2H1zM0 6h16v8H0z" />
        </svg>
      </button>
    </div>
  );
}

const tabBase = "h-[22px] rounded-t-[3px] border border-b-0 px-[6px] whitespace-nowrap";

export default function App() {
  return (
    <div className="flex min-h-screen flex-col bg-white font-['Liberation_Sans',Arial,sans-serif] text-[11px] leading-[13px] text-black">
      <header className="relative mt-[2px] font-['DejaVu_Sans',sans-serif] text-[#5a5f69]">
        <div className="flex h-[26px] items-start border-b border-[#a5a9af] bg-linear-to-b from-[#ced1d6] via-[#bcc3cb] via-25% to-[#e9ecf0] pt-[3px]">
          <QuickAccess />
          <button type="button" aria-label="Symbolleiste anpassen" className="ml-1 mt-[7px] flex w-3 flex-col items-center">
            <svg viewBox="0 0 6 6" className="size-[6px]"><path d="M0 .5h6M0 2.500h6L3 6z" fill="#555" stroke="#555" strokeWidth=".6" /></svg>
          </button>
          <h1 className="flex-1 whitespace-nowrap text-center text-[13px] leading-[21px]">638-EM-01 Erik Markwordt Gesamtschulden: 13.300,00 € Anzahl Gläubiger: 2</h1>
          <div className="flex w-[119px] items-center justify-between pl-[18px] pr-3 pt-1">
            <button type="button" aria-label="Minimieren"><svg viewBox="0 0 10 10" className="size-[10px]"><path d="M1 8h7" stroke="#4d525a" strokeWidth="2" /></svg></button>
            <button type="button" aria-label="Wiederherstellen"><svg viewBox="0 0 10 10" className="size-[10px]" fill="none" stroke="#667892"><path d="M1 3.500h6v4H1zM3 2h6v4" /><path d="M1 3h6" stroke="#444" strokeWidth="1.500" /></svg></button>
            <button type="button" aria-label="Schließen"><svg viewBox="0 0 10 10" className="size-[10px]" fill="none" stroke="#56657c" strokeWidth="2"><path d="m1 1 8 8M9 1 1 9" /></svg></button>
          </div>
        </div>
        <Orb />
        <nav className="flex h-[23px] items-end gap-[6px] bg-[#cfd4dd] pl-12 text-[13px] leading-5">
          <button type="button" className={`${tabBase} border-[#c4eef2] bg-linear-to-b from-[#fbfcfd] to-[#eceef4]`}>Mandant</button>
          {["Gläubiger - Schulden", "Regelinsolvenz", "Pläne - Gerichtsformulare", "Schriftverkehr"].map((t) => (
            <button key={t} type="button" className={`${tabBase} border-transparent`}>{t}</button>
          ))}
          <button type="button" className={`${tabBase} border-[#f4f4f4] bg-linear-to-b from-[#d8d6d4] via-[#ece4d6] to-[#efcc80]`}>Einstellung</button>
        </nav>
        <div className="flex h-[88px] gap-1 border-t border-[#b5b8be] bg-linear-to-b from-[#f2f4f8] from-0% via-[#d5dae5] via-20% to-[#eefafa] px-2 pt-[2px]">
          {groups.map((g) => (
            <section key={g.title} className="flex h-[84px] flex-col rounded-[3px] border border-[#9a9ca0] border-t-[#b9bcc2] bg-linear-to-b from-[#eff1f6] from-0% via-[#d7dce6] via-15% to-[#eff5f5]">
              <div className="flex h-[68px]">
                {g.items.map(([t, Icon, w]) => (
                  <button key={t} type="button" className={`flex flex-col items-center justify-center pt-px text-[10px] leading-3 ${w}`}>
                    <Icon />
                    <span className="whitespace-pre text-center">{t}</span>
                  </button>
                ))}
              </div>
              <div className="flex h-[14px] items-center bg-linear-to-b from-[#dde0ea] to-[#c5c9d4]">
                <h2 className={`flex-1 text-center text-[13px] leading-[14px] ${g.launcher ? "pl-[13px]" : ""}`}>{g.title}</h2>
                {g.launcher && (
                  <button type="button" aria-label={`${g.title} Optionen`} className="mr-1">
                    <svg viewBox="0 0 9 9" className="size-[9px]" fill="none" stroke="#555a63"><path d="M1 7V1h6M3.500 3.500l3 3" /><path d="M8 4v4H4z" fill="#555a63" /></svg>
                  </button>
                )}
              </div>
            </section>
          ))}
        </div>
        <div className="h-1 border-t border-[#c8c8c8] bg-[#bdbdbd]" />
        <div className="h-[2px] bg-[#d6dbe3]" />
      </header>

      <main className="flex flex-1">
        <nav className="mr-[2px] flex w-[21px] shrink-0 flex-col bg-linear-to-r from-[#d9e7fd] to-[#86a9e4] pl-px text-xs font-bold">
          {"ABCDEFGHIJKLMNOPQRSTUVWXYZ".split("").map((c) => (
            <button key={c} type="button" className={`h-[21px] pl-px text-left ${c > "W" ? "font-normal" : ""}`}>{c}</button>
          ))}
          <button type="button" aria-label="Filter entfernen" className="flex h-[21px] items-center"><RedX /></button>
        </nav>
        <MandantForm />
        <div className="ml-[7px] flex min-w-0 flex-1 flex-col">
          <MandantenGrid />
          <Toolbar />
          <TermineGrid />
        </div>
        <aside className="ml-1 flex w-6 shrink-0 flex-col items-center bg-linear-to-r from-[#d9e7fd] to-[#8eb0e8] pt-1">
          <button type="button" aria-label="Einklappen" className="mb-3 mt-[2px]">
            <svg viewBox="0 0 8 12" className="h-3 w-2"><path d="M7 1v10L1 6z" fill="#3f78e0" stroke="#2859b5" /></svg>
          </button>
          <button type="button" aria-label="Drucken"><Printer /></button>
          <hr className="mb-[10px] mt-[13px] w-[19px] border-t border-[#5f83c4]" />
          <button type="button" aria-label="Termine"><Days /></button>
          <hr className="mb-[10px] mt-[13px] w-[19px] border-t border-[#5f83c4]" />
          <button type="button" aria-label="Aufgabe"><PinNote /></button>
        </aside>
      </main>
      <footer className="mt-[3px] h-[3px] bg-[#b5d5fa]" />
    </div>
  );
}
